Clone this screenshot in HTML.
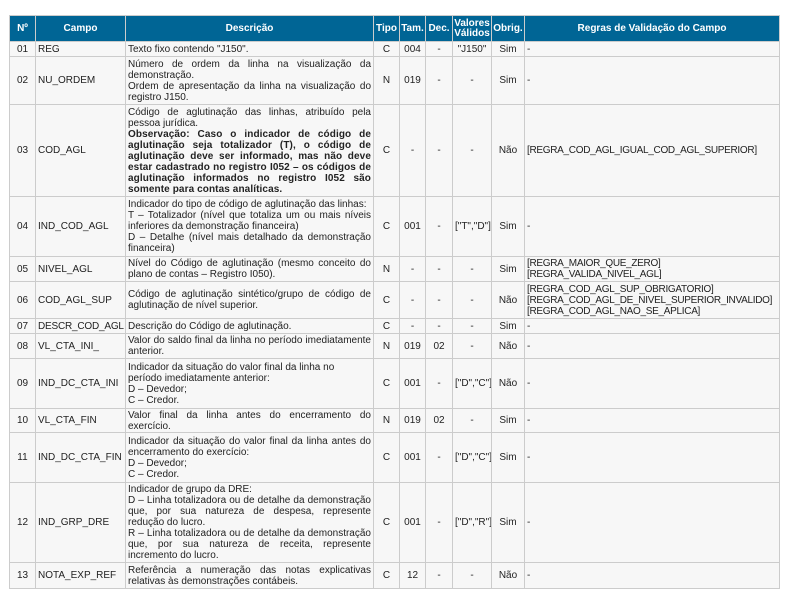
<!DOCTYPE html>
<html><head><meta charset="utf-8"><style>
body{margin:0;background:#fff;font-family:"Liberation Sans",Arial,sans-serif;}
table{position:absolute;left:9px;top:15px;border-collapse:collapse;table-layout:fixed;width:771px;font-size:10px;line-height:11px;color:#222;}
td,th{border:1px solid #ccc;padding:0 2px;vertical-align:middle;overflow:hidden;}
th{background:#006595;color:#fff;font-weight:bold;height:25px;font-size:10px;line-height:10px;padding:0;}
td{background:#f7f7f7;}
td.c{text-align:center;}
td.d{text-align:justify;}
td.r{letter-spacing:-0.3px;white-space:nowrap}
b{letter-spacing:0.1px}
</style></head><body>
<table>
<colgroup><col style="width:26px"><col style="width:90px"><col style="width:248px"><col style="width:26px"><col style="width:26px"><col style="width:27px"><col style="width:39px"><col style="width:33px"><col></colgroup>
<tr><th>Nº</th><th>Campo</th><th>Descrição</th><th>Tipo</th><th>Tam.</th><th>Dec.</th><th>Valores Válidos</th><th>Obrig.</th><th>Regras de Validação do Campo</th></tr>
<tr style="height:15px"><td class="c">01</td><td>REG</td><td class="d">Texto fixo contendo "J150".</td><td class="c">C</td><td class="c">004</td><td class="c">-</td><td class="c">"J150"</td><td class="c">Sim</td><td class="r">-</td></tr>
<tr style="height:48px"><td class="c">02</td><td>NU_ORDEM</td><td class="d">Número de ordem da linha na visualização da demonstração.<br>Ordem de apresentação da linha na visualização do registro J150.</td><td class="c">N</td><td class="c">019</td><td class="c">-</td><td class="c">-</td><td class="c">Sim</td><td class="r">-</td></tr>
<tr style="height:92px"><td class="c">03</td><td>COD_AGL</td><td class="d">Código de aglutinação das linhas, atribuído pela pessoa jurídica.<br><b>Observação: Caso o indicador de código de aglutinação seja totalizador (T), o código de aglutinação deve ser informado, mas não deve estar cadastrado no registro I052 – os códigos de aglutinação informados no registro I052 são somente para contas analíticas.</b></td><td class="c">C</td><td class="c">-</td><td class="c">-</td><td class="c">-</td><td class="c">Não</td><td class="r">[REGRA_COD_AGL_IGUAL_COD_AGL_SUPERIOR]</td></tr>
<tr style="height:60px"><td class="c">04</td><td>IND_COD_AGL</td><td class="d">Indicador do tipo de código de aglutinação das linhas:<br>T – Totalizador (nível que totaliza um ou mais níveis inferiores da demonstração financeira)<br>D – Detalhe (nível mais detalhado da demonstração financeira)</td><td class="c">C</td><td class="c">001</td><td class="c">-</td><td class="c">["T","D"]</td><td class="c">Sim</td><td class="r">-</td></tr>
<tr style="height:25px"><td class="c">05</td><td>NIVEL_AGL</td><td class="d">Nível do Código de aglutinação (mesmo conceito do plano de contas – Registro I050).</td><td class="c">N</td><td class="c">-</td><td class="c">-</td><td class="c">-</td><td class="c">Sim</td><td class="r">[REGRA_MAIOR_QUE_ZERO]<br>[REGRA_VALIDA_NIVEL_AGL]</td></tr>
<tr style="height:37px"><td class="c">06</td><td>COD_AGL_SUP</td><td class="d">Código de aglutinação sintético/grupo de código de aglutinação de nível superior.</td><td class="c">C</td><td class="c">-</td><td class="c">-</td><td class="c">-</td><td class="c">Não</td><td class="r">[REGRA_COD_AGL_SUP_OBRIGATORIO]<br>[REGRA_COD_AGL_DE_NIVEL_SUPERIOR_INVALIDO]<br>[REGRA_COD_AGL_NAO_SE_APLICA]</td></tr>
<tr style="height:15px"><td class="c">07</td><td style="white-space:nowrap;padding:0 1px 0 2px;letter-spacing:-0.2px">DESCR_COD_AGL</td><td class="d">Descrição do Código de aglutinação.</td><td class="c">C</td><td class="c">-</td><td class="c">-</td><td class="c">-</td><td class="c">Sim</td><td class="r">-</td></tr>
<tr style="height:25px"><td class="c">08</td><td>VL_CTA_INI_</td><td class="d">Valor do saldo final da linha no período imediatamente anterior.</td><td class="c">N</td><td class="c">019</td><td class="c">02</td><td class="c">-</td><td class="c">Não</td><td class="r">-</td></tr>
<tr style="height:50px"><td class="c">09</td><td>IND_DC_CTA_INI</td><td class="d">Indicador da situação do valor final da linha no<br>período imediatamente anterior:<br>D – Devedor;<br>C – Credor.</td><td class="c">C</td><td class="c">001</td><td class="c">-</td><td class="c">["D","C"]</td><td class="c">Não</td><td class="r">-</td></tr>
<tr style="height:24px"><td class="c">10</td><td>VL_CTA_FIN</td><td class="d">Valor final da linha antes do encerramento do exercício.</td><td class="c">N</td><td class="c">019</td><td class="c">02</td><td class="c">-</td><td class="c">Sim</td><td class="r">-</td></tr>
<tr style="height:50px"><td class="c">11</td><td>IND_DC_CTA_FIN</td><td class="d">Indicador da situação do valor final da linha antes do encerramento do exercício:<br>D – Devedor;<br>C – Credor.</td><td class="c">C</td><td class="c">001</td><td class="c">-</td><td class="c">["D","C"]</td><td class="c">Sim</td><td class="r">-</td></tr>
<tr style="height:80px"><td class="c">12</td><td>IND_GRP_DRE</td><td class="d">Indicador de grupo da DRE:<br>D – Linha totalizadora ou de detalhe da demonstração que, por sua natureza de despesa, represente redução do lucro.<br>R – Linha totalizadora ou de detalhe da demonstração que, por sua natureza de receita, represente incremento do lucro.</td><td class="c">C</td><td class="c">001</td><td class="c">-</td><td class="c">["D","R"]</td><td class="c">Sim</td><td class="r">-</td></tr>
<tr style="height:26px"><td class="c">13</td><td>NOTA_EXP_REF</td><td class="d">Referência a numeração das notas explicativas relativas às demonstrações contábeis.</td><td class="c">C</td><td class="c">12</td><td class="c">-</td><td class="c">-</td><td class="c">Não</td><td class="r">-</td></tr>
</table>
</body></html>
